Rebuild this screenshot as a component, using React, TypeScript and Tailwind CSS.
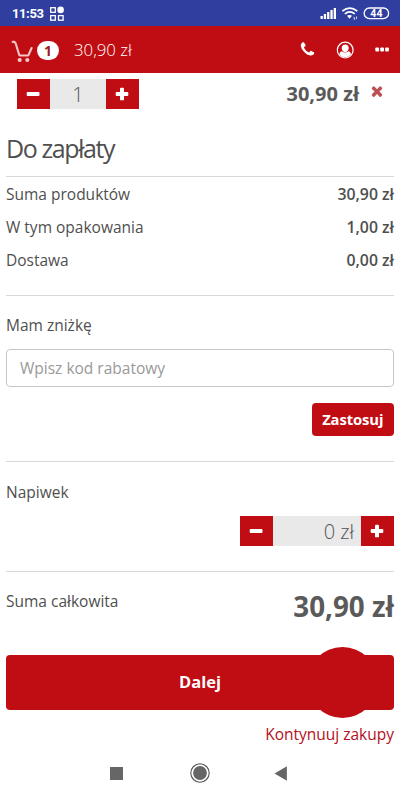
import type { ReactNode } from 'react';

function Plus() {
  return (
    <svg className="mr-px mb-px h-[14px] w-[14px]" viewBox="0 0 14 14" fill="white">
      <rect x="0.7" y="5" width="12.6" height="4" rx="0.9" />
      <rect x="5" y="0.7" width="4" height="12.6" rx="0.9" />
    </svg>
  );
}

function Minus() {
  return (
    <svg className="mr-px mb-px h-[14px] w-[14px]" viewBox="0 0 14 14" fill="white">
      <rect x="0.7" y="5" width="12.8" height="4" rx="0.9" />
    </svg>
  );
}

function Stepper({ children, field }: { children: ReactNode; field: string }) {
  return (
    <div className="flex h-[30px]">
      <button className="flex w-[33px] items-center justify-center bg-[#c00d14]"><Minus /></button>
      <div className={`bg-[#e9e9e9] text-[20px] leading-[31px] font-light text-[#555] ${field}`}>{children}</div>
      <button className="flex w-[33px] items-center justify-center bg-[#c00d14]"><Plus /></button>
    </div>
  );
}

function SumRow({ label, value }: { label: string; value: string }) {
  return (
    <div className="flex h-[33px] items-center justify-between">
      <span>{label}</span>
      <span className="text-[15.8px] font-semibold">{value}</span>
    </div>
  );
}

function StatusBar() {
  return (
    <div className="flex h-[26px] items-center bg-[#303f9f] pl-3 text-white">
      <span className="mt-0.5 w-[37px] font-[Roboto,sans-serif] text-[13px] font-bold tracking-[-0.4px]">11:53</span>
      <svg className="mt-0.5 h-4 w-4" viewBox="0 0 16 16" fill="none" stroke="white" strokeWidth="1.3">
        <rect x="1.7" y="1.7" width="4.6" height="4.6" />
        <circle cx="11.6" cy="3.9" r="3.3" fill="white" stroke="none" />
        <rect x="1.7" y="9.6" width="4.6" height="4.6" />
        <rect x="9.5" y="9.6" width="4.6" height="4.6" />
      </svg>
      <svg className="ml-auto h-[26px] w-[84px]" viewBox="316 0 84 26">
        <g fill="white">
          <rect x="320.5" y="16" width="2.3" height="3" />
          <rect x="323.8" y="14" width="2.3" height="5" />
          <rect x="327.1" y="12" width="2.3" height="7" />
          <rect x="330.4" y="10" width="2.3" height="9" />
          <rect x="333.7" y="8" width="2.3" height="11" />
          <path d="M347 15.8Q349.5 14 352 15.8L349.5 18.8Z" />
          <path d="M353.7 16.5l1 1.2v2h-.9zM356 16.5h.8v2l-.9 1z" />
        </g>
        <g fill="none" stroke="white" strokeWidth="1.7">
          <path d="M342.3 11.2Q349.8 5.2 357.3 11.2" />
          <path d="M344.8 13.9Q349.7 9.9 354.8 13.9" />
          <rect x="364.2" y="8" width="24.4" height="10.6" rx="5.2" strokeWidth="1.3" />
        </g>
        <text x="376.4" y="17.1" textAnchor="middle" className="fill-white font-[Roboto,sans-serif] text-[10.5px] font-bold">44</text>
      </svg>
    </div>
  );
}

function Header() {
  return (
    <header className="flex h-[47px] items-center bg-[#c00d14] pl-[11px] text-white">
      <svg className="mt-1 h-[23px] w-[23px]" viewBox="0 0 23 23" fill="none" stroke="#f3c5c7" strokeWidth="2.1" strokeLinecap="round" strokeLinejoin="round">
        <path d="M1.7 1.9H3.5L4.6 3.2L8.2 14.8Q8.5 15.5 9.2 15.5H16.6Q17.3 15.5 17.6 14.8L20.6 8" />
        <circle cx="8.7" cy="20" r="2.1" fill="#f3c5c7" stroke="none" />
        <circle cx="16.3" cy="20" r="2.1" fill="#f3c5c7" stroke="none" />
      </svg>
      <span className="ml-[3px] mt-0.5 flex h-[19px] w-[22px] items-center justify-center rounded-full bg-white text-[14px] font-bold text-[#9d1b20]">1</span>
      <span className="ml-[15px] text-[16.8px] font-light">30,90 zł</span>
      <svg className="ml-auto h-[17px] w-[17px]" viewBox="0 0 1792 1792" fill="white">
        <path d="M1600 1240q0 27-10 70.5t-21 68.5q-21 50-122 106-94 51-186 51-27 0-53-3.5t-57.5-12.5-47-14.5-55.5-20.5-49-18q-98-35-175-83-127-79-264-216t-216-264q-48-77-83-175-3-9-18-49t-20.5-55.5-14.5-47-12.5-57.5-3.5-53q0-92 51-186 56-101 106-122 25-11 68.5-21t70.5-10q14 0 21 3 18 6 53 76 11 19 30 54t35 63.5 31 53.5q3 4 17.5 25t21.5 35.5 7 28.5q0 20-28.5 50t-62 55-62 53-28.5 46q0 9 5 22.5t8.5 20.5 14 24 11.5 19q76 137 174 235t235 174q2 1 19 11.5t24 14 20.5 8.5 22.5 5q18 0 46-28.5t53-62 55-62 50-28.5q14 0 28.5 7t35.5 21.5 25 17.5q25 15 53.5 31t63.5 35 54 30q70 35 76 53 3 7 3 21z" />
      </svg>
      <svg className="ml-5 h-[18px] w-[18px]" viewBox="0 0 18 18">
        <circle cx="9.2" cy="9.1" r="7.9" fill="none" stroke="white" strokeWidth="1.2" />
        <path d="M9.2 3.5c2.2 0 3.5 1.5 3.500 3.500S11.300 11.200 9.200 11.200 5.700 9 5.700 7 7 3.500 9.200 3.500zM3.400 13.200c.3-1.900 1.300-2.800 2.700-2.900 1.800 1.600 4.400 1.600 6.200 0 1.400.1 2.400 1 2.700 2.900-2.700 3.800-8.900 3.800-11.600 0z" fill="white" />
      </svg>
      <svg className="ml-[21px] mr-[11px] h-[5px] w-[14px]" viewBox="0 0 14 5" fill="white">
        <rect x="0.3" y="0.5" width="3.8" height="4" rx="1" />
        <rect x="5.2" y="0.5" width="3.8" height="4" rx="1" />
        <rect x="10.1" y="0.5" width="3.8" height="4" rx="1" />
      </svg>
    </header>
  );
}

export default function App() {
  return (
    <div className="h-[800px] w-[400px] overflow-hidden bg-white font-['Open_Sans',sans-serif] text-[15.5px] text-[#4f4f4f]">
      <StatusBar />
      <Header />
      <main className="px-1.5">
        <div className="flex pt-1.5 pl-[11px]">
          <Stepper field="w-[56px] text-center">1</Stepper>
          <span className="ml-auto text-[20px] leading-[29px] font-bold text-[#5a5a5a]">30,90 zł</span>
          <svg className="mt-[4px] mr-[9px] ml-[10px] h-[16px] w-[16px]" viewBox="0 0 1792 1792" fill="#bc5053">
            <path d="M1490 1322q0 40-28 68l-136 136q-28 28-68 28t-68-28l-294-294-294 294q-28 28-68 28t-68-28l-136-136q-28-28-28-68t28-68l294-294-294-294q-28-28-28-68t28-68l136-136q28-28 68-28t68 28l294 294 294-294q28-28 68-28t68 28l136 136q28 28 28 68t-28 68l-294 294 294 294q28 28 28 68z" />
          </svg>
        </div>

        <h1 className="h-[68px] border-b border-[#d8d8d8] pt-[22px] text-[25px] leading-[35px] tracking-[-1.4px]">Do zapłaty</h1>

        <section className="h-[119px] border-b border-[#d8d8d8] pt-px">
          <SumRow label="Suma produktów" value="30,90 zł" />
          <SumRow label="W tym opakowania" value="1,00 zł" />
          <SumRow label="Dostawa" value="0,00 zł" />
        </section>

        <section className="flex h-[166px] flex-col border-b border-[#d8d8d8] pt-[18px]">
          <label className="leading-[22px]">Mam zniżkę</label>
          <input
            className="mt-[13px] h-[38px] rounded-[4px] border border-[#c6c6c6] pl-[13px] text-[15.5px] placeholder:text-[#999] placeholder:opacity-100"
            placeholder="Wpisz kod rabatowy"
          />
          <button className="mt-4 h-[33px] w-[82.5px] self-end rounded-[4px] bg-[#c00d14] text-[14.8px] font-bold tracking-[-0.1px] text-white">Zastosuj</button>
        </section>

        <section className="flex h-[110px] flex-col border-b border-[#d8d8d8] pt-[19px]">
          <span className="leading-[22px]">Napiwek</span>
          <div className="mt-[13px] flex justify-end">
            <Stepper field="w-[88px] pr-[7px] text-right">0 zł</Stepper>
          </div>
        </section>

        <section className="flex h-[83px] justify-between pt-[18px]">
          <span className="leading-[22px]">Suma całkowita</span>
          <span className="text-[27.8px] leading-[33px] font-bold text-[#5a5a5a]">30,90 zł</span>
        </section>

        <button className="relative block h-[55px] w-full rounded-[4px] bg-[#c00d14]">
          <span className="absolute -top-2 left-[300.5px] h-[71px] w-[71px] rounded-full bg-[#c00d14]" />
          <span className="relative text-[16.5px] font-bold text-white">Dalej</span>
        </button>
        <div className="mt-[13px] text-right leading-[23px] text-[#b30f1c]">Kontynuuj zakupy</div>
      </main>

      <nav className="mt-[14px] flex h-[26px] items-center pl-[110px]">
        <span className="h-[13px] w-[13px] bg-[#666]" />
        <svg className="ml-[66px] h-[22px] w-[22px]" viewBox="0 0 22 22">
          <circle cx="11" cy="11" r="9.2" fill="none" stroke="#555" strokeWidth="1.1" />
          <circle cx="11" cy="11" r="6.9" fill="#666" />
        </svg>
        <svg className="ml-[63px] h-[15px] w-[13px]" viewBox="0 0 13 15" fill="#666">
          <path d="M0.5 7.5L12.9 0.2V14.8Z" />
        </svg>
      </nav>
    </div>
  );
}
